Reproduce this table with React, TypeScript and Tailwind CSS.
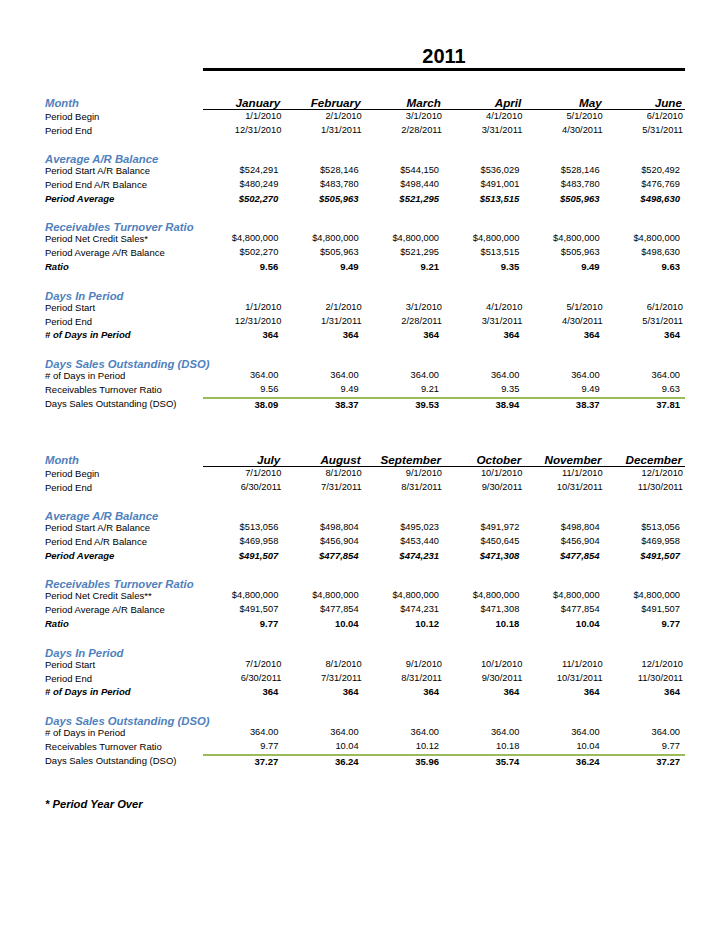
import React from "react";

type Kind = "date" | "num" | "bnum" | "binum";

interface BlockData {
  months: string[];
  begin: string[];
  end: string[];
  avgStart: string[];
  avgEnd: string[];
  avg: string[];
  sales: string[];
  salesLabel: string;
  avgBal: string[];
  ratio: string[];
  dStart: string[];
  dEnd: string[];
  days: string[];
  dsoDays: string[];
  dsoRatio: string[];
  dso: string[];
}

const block1: BlockData = {
  months: ["January", "February", "March", "April", "May", "June"],
  begin: ["1/1/2010", "2/1/2010", "3/1/2010", "4/1/2010", "5/1/2010", "6/1/2010"],
  end: ["12/31/2010", "1/31/2011", "2/28/2011", "3/31/2011", "4/30/2011", "5/31/2011"],
  avgStart: ["$524,291", "$528,146", "$544,150", "$536,029", "$528,146", "$520,492"],
  avgEnd: ["$480,249", "$483,780", "$498,440", "$491,001", "$483,780", "$476,769"],
  avg: ["$502,270", "$505,963", "$521,295", "$513,515", "$505,963", "$498,630"],
  salesLabel: "Period Net Credit Sales*",
  sales: ["$4,800,000", "$4,800,000", "$4,800,000", "$4,800,000", "$4,800,000", "$4,800,000"],
  avgBal: ["$502,270", "$505,963", "$521,295", "$513,515", "$505,963", "$498,630"],
  ratio: ["9.56", "9.49", "9.21", "9.35", "9.49", "9.63"],
  dStart: ["1/1/2010", "2/1/2010", "3/1/2010", "4/1/2010", "5/1/2010", "6/1/2010"],
  dEnd: ["12/31/2010", "1/31/2011", "2/28/2011", "3/31/2011", "4/30/2011", "5/31/2011"],
  days: ["364", "364", "364", "364", "364", "364"],
  dsoDays: ["364.00", "364.00", "364.00", "364.00", "364.00", "364.00"],
  dsoRatio: ["9.56", "9.49", "9.21", "9.35", "9.49", "9.63"],
  dso: ["38.09", "38.37", "39.53", "38.94", "38.37", "37.81"],
};

const block2: BlockData = {
  months: ["July", "August", "September", "October", "November", "December"],
  begin: ["7/1/2010", "8/1/2010", "9/1/2010", "10/1/2010", "11/1/2010", "12/1/2010"],
  end: ["6/30/2011", "7/31/2011", "8/31/2011", "9/30/2011", "10/31/2011", "11/30/2011"],
  avgStart: ["$513,056", "$498,804", "$495,023", "$491,972", "$498,804", "$513,056"],
  avgEnd: ["$469,958", "$456,904", "$453,440", "$450,645", "$456,904", "$469,958"],
  avg: ["$491,507", "$477,854", "$474,231", "$471,308", "$477,854", "$491,507"],
  salesLabel: "Period Net Credit Sales**",
  sales: ["$4,800,000", "$4,800,000", "$4,800,000", "$4,800,000", "$4,800,000", "$4,800,000"],
  avgBal: ["$491,507", "$477,854", "$474,231", "$471,308", "$477,854", "$491,507"],
  ratio: ["9.77", "10.04", "10.12", "10.18", "10.04", "9.77"],
  dStart: ["7/1/2010", "8/1/2010", "9/1/2010", "10/1/2010", "11/1/2010", "12/1/2010"],
  dEnd: ["6/30/2011", "7/31/2011", "8/31/2011", "9/30/2011", "10/31/2011", "11/30/2011"],
  days: ["364", "364", "364", "364", "364", "364"],
  dsoDays: ["364.00", "364.00", "364.00", "364.00", "364.00", "364.00"],
  dsoRatio: ["9.77", "10.04", "10.12", "10.18", "10.04", "9.77"],
  dso: ["37.27", "36.24", "35.96", "35.74", "36.24", "37.27"],
};

function cellClass(kind: Kind): string {
  switch (kind) {
    case "date":
      return "w-[80.33px] text-right pr-[2px] text-[9.3px]";
    case "num":
      return "w-[80.33px] text-right pr-[5px] text-[9.3px]";
    case "bnum":
      return "w-[80.33px] text-right pr-[5px] text-[9.5px] font-bold";
    case "binum":
      return "w-[80.33px] text-right pr-[5px] text-[9.5px] font-bold italic";
  }
}

function Row({
  label,
  values,
  kind,
  strongLabel,
  h,
  green,
}: {
  label: string;
  values: string[];
  kind: Kind;
  strongLabel?: boolean;
  h: "a" | "b";
  green?: boolean;
}) {
  const hCls = h === "a" ? "h-[13.3px] leading-[13.3px]" : "h-[13.8px] leading-[13.8px]";
  return (
    <div className={`flex ${hCls}`}>
      <div
        className={`w-[158px] whitespace-nowrap text-[9.5px] ${
          strongLabel ? "font-bold italic" : ""
        }`}
      >
        {label}
      </div>
      <div
        className={`flex ${
          green ? "border-t-2 border-[#9bbb59] leading-[11.8px]" : ""
        }`}
      >
        {values.map((v, i) => (
          <div key={i} className={cellClass(kind)}>
            {v}
          </div>
        ))}
      </div>
    </div>
  );
}

function SectionHeader({ title }: { title: string }) {
  return (
    <div className="mt-[17px] h-[10px] leading-[10px] whitespace-nowrap text-[11.3px] font-bold italic text-[#4f81bd]">
      {title}
    </div>
  );
}

function Block({ d }: { d: BlockData }) {
  return (
    <div>
      <div className="flex h-[13px]">
        <div className="w-[158px] leading-[13px] text-[11.3px] font-bold italic text-[#4f81bd]">
          Month
        </div>
        <div className="flex h-[13px] border-b border-black">
          {d.months.map((m) => (
            <div
              key={m}
              className="w-[80.33px] text-right pr-[3px] text-[11.7px] font-bold italic leading-[12px]"
            >
              {m}
            </div>
          ))}
        </div>
      </div>
      <Row label="Period Begin" values={d.begin} kind="date" h="a" />
      <Row label="Period End" values={d.end} kind="date" h="a" />

      <SectionHeader title="Average A/R Balance" />
      <Row label="Period Start A/R Balance" values={d.avgStart} kind="num" h="b" />
      <Row label="Period End A/R Balance" values={d.avgEnd} kind="num" h="b" />
      <Row label="Period Average" values={d.avg} kind="binum" strongLabel h="b" />

      <SectionHeader title="Receivables Turnover Ratio" />
      <Row label={d.salesLabel} values={d.sales} kind="num" h="b" />
      <Row label="Period Average A/R Balance" values={d.avgBal} kind="num" h="b" />
      <Row label="Ratio" values={d.ratio} kind="bnum" strongLabel h="b" />

      <SectionHeader title="Days In Period" />
      <Row label="Period Start" values={d.dStart} kind="date" h="b" />
      <Row label="Period End" values={d.dEnd} kind="date" h="b" />
      <Row label="# of Days in Period" values={d.days} kind="bnum" strongLabel h="b" />

      <SectionHeader title="Days Sales Outstanding (DSO)" />
      <Row label="# of Days in Period" values={d.dsoDays} kind="num" h="b" />
      <Row label="Receivables Turnover Ratio" values={d.dsoRatio} kind="num" h="b" />
      <Row label="Days Sales Outstanding (DSO)" values={d.dso} kind="bnum" h="b" green />
    </div>
  );
}

export default function App() {
  return (
    <div className="w-[728px] h-[943px] bg-white text-black font-['Liberation_Sans',Arial,sans-serif] pl-[45px] pt-[44.7px] overflow-hidden">
      <div className="flex">
        <div className="w-[158px]" />
        <div className="w-[482px] h-[22px] leading-[22px] text-center text-[20px] font-bold">
          2011
        </div>
      </div>
      <div className="ml-[158px] mt-[1.3px] w-[482px] h-[3px] bg-black" />
      <div className="mt-[26.5px]">
        <Block d={block1} />
      </div>
      <div className="mt-[43.8px]">
        <Block d={block2} />
      </div>
      <div className="mt-[29px] h-[14px] leading-[14px] text-[11.2px] font-bold italic">
        * Period Year Over
      </div>
    </div>
  );
}
